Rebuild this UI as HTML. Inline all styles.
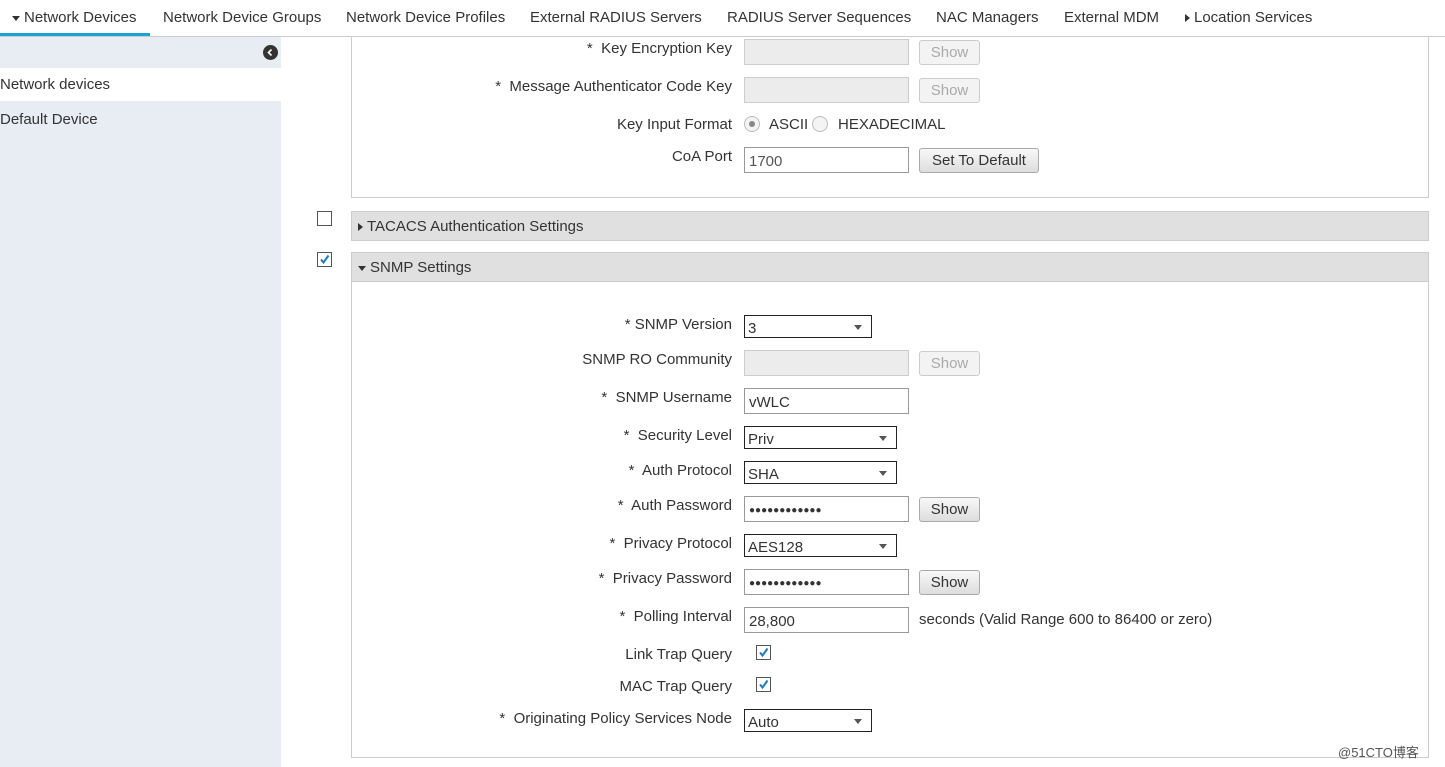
<!DOCTYPE html><html><head><style>
body{margin:0;width:1445px;height:767px;position:relative;overflow:hidden;background:#fff;font-family:"Liberation Sans",Arial,sans-serif;font-size:15px;color:#333}
.a{position:absolute;white-space:nowrap}
.tab{top:9px}
.lbl{position:absolute;right:713px;white-space:nowrap}
.in{position:absolute;left:744px;height:24px;border:1px solid #999;background:#fff;box-sizing:content-box;font-size:15px;line-height:28px;padding-left:4px;width:159px}
.dis{background:#ececec;border-color:#ccc}
.dots{font-size:10px;letter-spacing:0}
.btn{position:absolute;left:919px;height:23px;border:1px solid #aaa;border-radius:3px;background:linear-gradient(#f8f8f8,#ddd);text-align:center;line-height:23px;font-size:15px;color:#333}
.btn.d{color:#aaa;border-color:#ccc;background:#f3f3f3}
.sel{position:absolute;left:744px;height:21px;border:1px solid #222;background:#fff;font-size:15px;line-height:26px;padding-left:3px;box-sizing:content-box}
.sel:after{content:"";position:absolute;right:9px;top:9px;border:4px solid transparent;border-top:5px solid #555;border-bottom:0}
.cb{position:absolute;width:13px;height:13px;border:1px solid #555;background:#fff}
.cb svg{position:absolute;left:0;top:0}
.tri{display:inline-block;width:0;height:0;vertical-align:middle;margin-right:4px}
.down{border:4px solid transparent;border-top:5px solid #333;border-bottom:0}
.right{border:4px solid transparent;border-left:5px solid #333;border-right:0}
</style></head><body>
<div class="a tab" style="left:12px"><span class="tri down"></span>Network Devices</div>
<div class="a" style="left:0;top:33px;width:150px;height:4px;background:#1ba0d7"></div>
<div class="a tab" style="left:163px">Network Device Groups</div>
<div class="a tab" style="left:346px">Network Device Profiles</div>
<div class="a tab" style="left:530px">External RADIUS Servers</div>
<div class="a tab" style="left:727px">RADIUS Server Sequences</div>
<div class="a tab" style="left:936px">NAC Managers</div>
<div class="a tab" style="left:1064px">External MDM</div>
<div class="a tab" style="left:1185px"><span class="tri right"></span>Location Services</div>
<div class="a" style="left:0;top:36px;width:1445px;height:1px;background:#ccc"></div>
<div class="a" style="left:0;top:37px;width:281px;height:730px;background:#e8ecf3"></div>
<div class="a" style="left:0;top:68px;width:281px;height:33px;background:#fff"></div>
<div class="a" style="left:263px;top:45px;width:15px;height:15px;border-radius:50%;background:#333"><svg width="15" height="15"><path d="M8.5 4.5L5.5 7.5L8.5 10.5" stroke="#fff" stroke-width="1.6" fill="none"/></svg></div>
<div class="a" style="left:0;top:76px">Network devices</div>
<div class="a" style="left:0;top:111px">Default Device</div>
<div class="a" style="left:351px;top:37px;width:1076px;height:160px;border:1px solid #ccc;border-top:0"></div>
<div class="lbl" style="top:40px">*&nbsp; Key Encryption Key</div>
<div class="in dis" style="top:39px"></div><div class="btn d" style="top:40px;width:59px">Show</div>
<div class="lbl" style="top:78px">*&nbsp; Message Authenticator Code Key</div>
<div class="in dis" style="top:77px"></div><div class="btn d" style="top:78px;width:59px">Show</div>
<div class="lbl" style="top:116px">Key Input Format</div>
<div class="a" style="left:744px;top:116px;width:14px;height:14px;border-radius:50%;border:1px solid #bbb;background:#f4f4f4"><div style="margin:4px;width:6px;height:6px;border-radius:50%;background:#888"></div></div>
<div class="a" style="left:769px;top:116px">ASCII</div>
<div class="a" style="left:812px;top:116px;width:14px;height:14px;border-radius:50%;border:1px solid #bbb;background:#f4f4f4"></div>
<div class="a" style="left:838px;top:116px">HEXADECIMAL</div>
<div class="lbl" style="top:148px">CoA Port</div>
<div class="in" style="top:147px;color:#555">1700</div><div class="btn" style="top:148px;width:118px">Set To Default</div>
<div class="cb" style="left:317px;top:211px"></div>
<div class="a" style="left:351px;top:211px;width:1076px;height:28px;background:#e0e0e0;border:1px solid #ccc"></div>
<div class="a" style="left:358px;top:218px"><span class="tri right"></span>TACACS Authentication Settings</div>
<div class="cb" style="left:317px;top:252px"><svg width="13" height="13"><path d="M3 6.5L5.5 9.5L10.5 2.5" stroke="#1a7cc0" stroke-width="2" fill="none"/></svg></div>
<div class="a" style="left:351px;top:252px;width:1076px;height:504px;border:1px solid #ccc"></div>
<div class="a" style="left:352px;top:253px;width:1076px;height:28px;background:#e0e0e0;border-bottom:1px solid #ccc"></div>
<div class="a" style="left:358px;top:259px"><span class="tri down"></span>SNMP Settings</div>
<div class="lbl" style="top:316px">* SNMP Version</div>
<div class="sel" style="top:315px;width:123px">3</div>
<div class="lbl" style="top:351px">SNMP RO Community</div>
<div class="in dis" style="top:350px"></div><div class="btn d" style="top:351px;width:59px">Show</div>
<div class="lbl" style="top:389px">*&nbsp; SNMP Username</div>
<div class="in" style="top:388px">vWLC</div>
<div class="lbl" style="top:427px">*&nbsp; Security Level</div>
<div class="sel" style="top:426px;width:148px">Priv</div>
<div class="lbl" style="top:462px">*&nbsp; Auth Protocol</div>
<div class="sel" style="top:461px;width:148px">SHA</div>
<div class="lbl" style="top:497px">*&nbsp; Auth Password</div>
<div class="in dots" style="top:496px;line-height:27px">●●●●●●●●●●●●</div><div class="btn" style="top:497px;width:59px">Show</div>
<div class="lbl" style="top:535px">*&nbsp; Privacy Protocol</div>
<div class="sel" style="top:534px;width:148px">AES128</div>
<div class="lbl" style="top:570px">*&nbsp; Privacy Password</div>
<div class="in dots" style="top:569px;line-height:27px">●●●●●●●●●●●●</div><div class="btn" style="top:570px;width:59px">Show</div>
<div class="lbl" style="top:608px">*&nbsp; Polling Interval</div>
<div class="in" style="top:607px">28,800</div>
<div class="a" style="left:919px;top:611px">seconds (Valid Range 600 to 86400 or zero)</div>
<div class="lbl" style="top:646px">Link Trap Query</div>
<div class="cb" style="left:756px;top:645px"><svg width="13" height="13"><path d="M3 6.5L5.5 9.5L10.5 2.5" stroke="#1a7cc0" stroke-width="2" fill="none"/></svg></div>
<div class="lbl" style="top:678px">MAC Trap Query</div>
<div class="cb" style="left:756px;top:677px"><svg width="13" height="13"><path d="M3 6.5L5.5 9.5L10.5 2.5" stroke="#1a7cc0" stroke-width="2" fill="none"/></svg></div>
<div class="lbl" style="top:710px">*&nbsp; Originating Policy Services Node</div>
<div class="sel" style="top:709px;width:123px">Auto</div>
<div class="a" style="left:1338px;top:742px;font-size:13px;color:#555;font-family:'Liberation Sans','Noto Sans CJK SC',sans-serif">@51CTO博客</div>
</body></html>
